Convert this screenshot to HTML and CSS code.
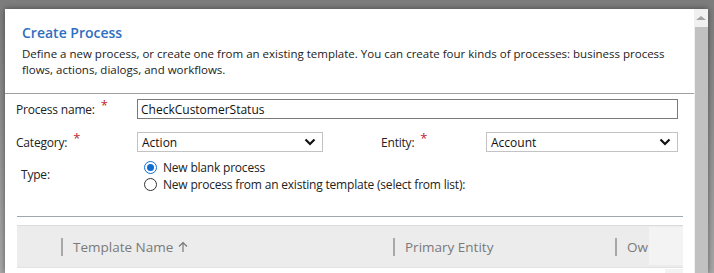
FILE: index.html
```html
<!DOCTYPE html>
<html lang="en">
<head>
    <meta charset="UTF-8">
    <title>Create Process</title>
    <link rel="stylesheet" href="styles.css">
</head>
<body>
    <div class="dialog">
        <div class="dialog-body">
            <div class="dialog-header">
                <h2>Create Process</h2>
                <p>Define a new process, or create one from an existing template. You can create four kinds of processes: business process flows, actions, dialogs, and workflows.</p>
            </div>
            <div class="form">
                <div class="form-row">
                    <label class="field-label">Process name: <span class="req">*</span></label>
                    <input type="text" class="text-input" value="CheckCustomerStatus">
                </div>
                <div class="form-row">
                    <label class="field-label">Category: <span class="req">*</span></label>
                    <div class="select select-category">
                        <span>Action</span>
                        <svg width="12" height="8" viewBox="0 0 12 8"><path d="M1.5 1.5 L6 6 L10.5 1.5" fill="none" stroke="#111" stroke-width="2.2"/></svg>
                    </div>
                    <label class="field-label entity-label">Entity: <span class="req">*</span></label>
                    <div class="select select-entity">
                        <span>Account</span>
                        <svg width="12" height="8" viewBox="0 0 12 8"><path d="M1.5 1.5 L6 6 L10.5 1.5" fill="none" stroke="#111" stroke-width="2.2"/></svg>
                    </div>
                </div>
                <div class="form-row type-row">
                    <label class="field-label type-label">Type:</label>
                    <div class="radios">
                        <div class="radio-option"><span class="radio checked"></span>New blank process</div>
                        <div class="radio-option"><span class="radio"></span>New process from an existing template (select from list):</div>
                    </div>
                </div>
            </div>
            <div class="grid-section">
                <div class="grid-rule"></div>
                <div class="grid-header">
                    <div class="col col-check"></div>
                    <div class="col col-name"><span class="divider"></span>Template Name
                        <svg class="sort" width="10" height="12" viewBox="0 0 10 12"><path d="M5 11 V1.5 M1 5.5 L5 1.5 L9 5.5" fill="none" stroke="#7a7a7a" stroke-width="1.2"/></svg>
                    </div>
                    <div class="col col-entity"><span class="divider"></span>Primary Entity</div>
                    <div class="col col-owner"><span class="divider"></span>Ow</div>
                    <div class="col-cover"></div>
                </div>
                <div class="grid-rows">
                    <div class="row-cover"></div>
                </div>
            </div>
        </div>
        <div class="scrollbar">
            <div class="scroll-arrow"></div>
            <div class="scroll-thumb"></div>
        </div>
    </div>
</body>
</html>
```

FILE: styles.css
```css
* {
    margin: 0;
    padding: 0;
    box-sizing: border-box;
}
body {
    font-family: 'Open Sans', 'Noto Sans', sans-serif;
    background: linear-gradient(to bottom, #7c7c7c 0%, #a8a8a8 100%);
    height: 273px;
    overflow: hidden;
    color: #222;
}
.dialog {
    display: flex;
    margin: 9px 6px 0 5px;
    height: 264px;
    background: white;
    box-shadow: 0 0 6px rgba(0, 0, 0, 0.45);
}
.dialog-body {
    flex: 1;
    overflow: hidden;
}
.dialog-header {
    padding: 14px 20px 0 17px;
    height: 85px;
    border-bottom: 1px solid #a0a0a0;
}
.dialog-header h2 {
    font-size: 14px;
    font-weight: 600;
    color: #2f6fbf;
    line-height: 20px;
}
.dialog-header p {
    font-size: 11.5px;
    line-height: 16px;
    margin-top: 3px;
}
.form {
    padding: 5px 0 0 11px;
    font-size: 12px;
}
.form-row {
    display: flex;
    align-items: center;
    height: 20px;
    margin-bottom: 13px;
}
.field-label {
    width: 121px;
    flex-shrink: 0;
    letter-spacing: -0.2px;
}
.req {
    color: #c0272d;
    font-size: 13px;
    position: relative;
    top: -4px;
    margin-left: 3px;
}
.text-input {
    width: 541px;
    height: 20px;
    border: 1px solid #7a7a7a;
    font-family: inherit;
    font-size: 12px;
    padding: 0 3px;
    color: #111;
    outline: none;
}
.select {
    display: flex;
    align-items: center;
    justify-content: space-between;
    height: 20px;
    border: 1px solid #c3c3c3;
    padding: 0 6px 0 4px;
    color: #111;
}
.select-category {
    width: 186px;
}
.entity-label {
    width: 105px;
    margin-left: 58px;
}
.select-entity {
    width: 192px;
}
.type-row {
    align-items: flex-start;
    height: auto;
    margin-top: -6px;
}
.type-label {
    padding-left: 5px;
    width: 128px;
    padding-top: 7px;
}
.radios {
    display: flex;
    flex-direction: column;
}
.radio-option {
    display: flex;
    align-items: center;
    height: 17px;
    letter-spacing: -0.2px;
}
.radio {
    width: 13px;
    height: 13px;
    border: 1px solid #333;
    border-radius: 50%;
    margin-right: 6px;
    position: relative;
}
.radio.checked {
    border-color: #0f6cd0;
}
.radio.checked::after {
    content: '';
    position: absolute;
    left: 2px;
    top: 2px;
    width: 7px;
    height: 7px;
    border-radius: 50%;
    background: #0f6cd0;
}
.grid-section {
    padding: 0 11px 0 12px;
    margin-top: 23px;
}
.grid-rule {
    height: 1px;
    background: #9ea6b0;
    margin-bottom: 8px;
}
.grid-header {
    display: flex;
    align-items: center;
    height: 43px;
    background: #ececec;
    border-top: 1px solid #dcdcdc;
    border-bottom: 1px solid #e2e2e2;
    color: #7a7a7a;
    font-size: 13.5px;
    position: relative;
}
.col {
    display: flex;
    align-items: center;
    height: 100%;
}
.col-check {
    width: 44px;
}
.col-name {
    width: 332px;
}
.col-entity {
    width: 222px;
}
.col-owner {
    flex: 1;
}
.divider {
    width: 2px;
    height: 18px;
    background: #a8a8a8;
    margin-right: 10px;
}
.sort {
    margin-left: 5px;
}
.col-cover {
    position: absolute;
    right: 0;
    top: 1px;
    bottom: 2px;
    width: 34px;
    background: #f3f3f3;
}
.grid-rows {
    height: 20px;
    position: relative;
}
.row-cover {
    position: absolute;
    right: 0;
    top: 1px;
    width: 18px;
    height: 10px;
    background: #f3f3f3;
}
.scrollbar {
    width: 14px;
    background: #f0f0f0;
    display: flex;
    flex-direction: column;
    align-items: center;
}
.scroll-arrow {
    margin-top: 7px;
    width: 0;
    height: 0;
    border-left: 5px solid transparent;
    border-right: 5px solid transparent;
    border-bottom: 4px solid #a3a3a3;
}
.scroll-thumb {
    margin-top: 7px;
    width: 13px;
    flex: 1;
    background: #c1c1c1;
}
```
